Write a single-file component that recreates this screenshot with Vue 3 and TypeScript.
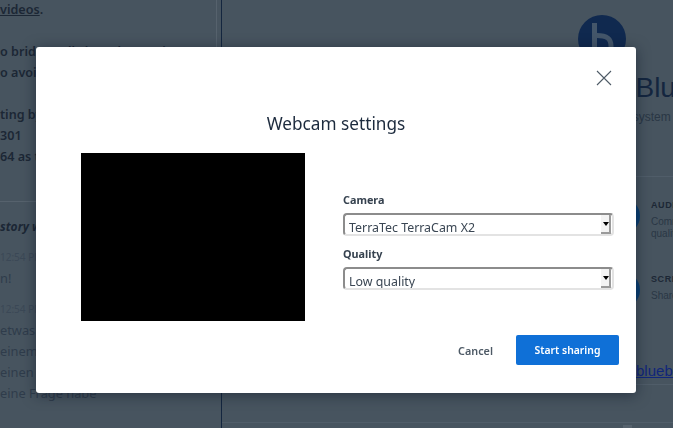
<script setup lang="ts">
const notes = [
  { html: ['<u>videos</u>.'] },
  { html: ['o bridge calls into the session', 'o avoid echo and mute'] },
  { html: ['ting by phone, call', '301', '64 as the PIN number'] },
]

const settings = [
  { label: 'Camera', value: 'TerraTec TerraCam X2' },
  { label: 'Quality', value: 'Low quality' },
]
</script>

<template>
  <div class="page">
    <aside class="left">
      <div class="notes">
        <p v-for="(block, i) in notes" :key="i" class="block">
          <span v-for="line in block.html" :key="line" class="line" v-html="line"></span>
        </p>
      </div>
      <div class="chat">
        <div class="history">story will be saved</div>
        <div class="stamp">12:54 PM</div>
        <div class="msg">n!</div>
        <div class="stamp">12:54 PM</div>
        <div class="msg">etwas spät</div>
        <div class="msg">einem Mikrofon</div>
        <div class="msg">einen Fehler</div>
        <div class="msg">eine Frage habe</div>
      </div>
    </aside>

    <main class="right">
      <div class="logo">
        <svg viewBox="0 0 48 48" width="48" height="48">
          <circle cx="24" cy="24" r="24" fill="#10294f" />
          <path d="M16.5 8V48M19 20.5C28 20.5 33 23 33 31V48" stroke="#44566a" stroke-width="5" fill="none" />
        </svg>
      </div>
      <h1 class="brand">BigBlueButton</h1>
      <div class="tagline">An open source web conferencing system</div>
      <div class="features">
        <div class="feature">
          <span class="dot"></span>
          <div>
            <div class="feature-title">AUDIO CONFERENCE</div>
            <div class="feature-text">Communicate using high<br />quality audio.</div>
          </div>
        </div>
        <div class="feature">
          <span class="dot"></span>
          <div>
            <div class="feature-title">SCREEN SHARING</div>
            <div class="feature-text">Share your screen.</div>
          </div>
        </div>
      </div>
      <div class="site-row">
        <a class="site">bigbluebutton.org</a>
      </div>
      <div class="bottom-bar"><span class="bar-box"></span></div>
    </main>

    <div class="overlay">
      <section class="modal">
        <button class="close" aria-label="Close">
          <svg viewBox="0 0 16 16" width="16" height="16">
            <path d="M1 1l14 14M15 1L1 15" stroke="#4e5a66" stroke-width="1.1" fill="none" />
          </svg>
        </button>
        <h2 class="title">Webcam settings</h2>
        <div class="body">
          <div class="video"></div>
          <div class="fields">
            <div v-for="s in settings" :key="s.label" class="field">
              <label>{{ s.label }}</label>
              <div class="select">
                <span class="value">{{ s.value }}</span>
                <span class="arrow"></span>
              </div>
            </div>
          </div>
        </div>
        <footer class="actions">
          <button class="cancel">Cancel</button>
          <button class="start">Start sharing</button>
        </footer>
      </section>
    </div>
  </div>
</template>

<style>
html,
body {
  margin: 0;
  overflow: hidden;
}
</style>

<style scoped>
.page {
  width: 673px;
  height: 428px;
  display: flex;
  overflow: hidden;
  background: #47545f;
  font-family: "Noto Sans", sans-serif;
  color: #1c2735;
}
.left {
  width: 222px;
  flex: none;
  box-sizing: border-box;
  border-right: 1px solid #14263f;
  overflow: hidden;
  white-space: nowrap;
  font-size: 12.8px;
  line-height: 21px;
}
.notes {
  width: 217px;
  height: 203px;
  margin-top: -1px;
  box-sizing: border-box;
  border-right: 1px solid #56626d;
  border-bottom: 1px solid #56626d;
  font-size: 12.6px;
  font-weight: 600;
  overflow: hidden;
}
.block {
  margin: 0 0 21px;
}
.line {
  display: block;
}
.chat {
  display: flex;
  flex-direction: column;
  padding-top: 14px;
}
.history {
  font-size: 12px;
  font-style: italic;
  font-weight: 700;
}
.stamp {
  font-size: 10px;
  color: #3b4856;
  margin-top: 10px;
}
.msg {
  color: #2f3c4b;
}
.right {
  flex: 1;
  min-width: 0;
  overflow: hidden;
  white-space: nowrap;
  font-family: "Liberation Sans", sans-serif;
}
.logo {
  display: flex;
  padding: 15px 0 0 356px;
}
.brand {
  margin: 8px 0 0 373px;
  font-size: 28px;
  line-height: 34px;
  font-weight: 400;
  color: #14263f;
}
.tagline {
  font-size: 12px;
  line-height: 14px;
  margin: 5px 0 0 226px;
  color: #2a3745;
}
.features {
  display: flex;
  flex-direction: column;
  gap: 38px;
  margin-top: 52px;
  padding: 21px 0 0 382px;
  border-top: 1px solid #505d69;
}
.feature {
  display: flex;
  gap: 11px;
  height: 36px;
}
.dot {
  width: 36px;
  height: 36px;
  border-radius: 50%;
  background: #0a3f73;
  flex: none;
}
.feature-title {
  margin-top: 1px;
  margin-bottom: 5px;
  font-size: 9px;
  font-weight: 700;
  line-height: 12px;
  letter-spacing: 0.6px;
}
.feature-text {
  font-size: 10px;
  line-height: 12px;
  color: #2a3745;
}
.site-row {
  margin-top: 54px;
  padding: 0 0 4px 394px;
  border-bottom: 1px solid #505d69;
}
.site {
  display: block;
  font-size: 15px;
  line-height: 18px;
  color: #10267a;
  text-decoration: underline;
}
.bottom-bar {
  margin-top: 37px;
  border-top: 1px solid #505d69;
  padding: 2px 0 0 401px;
}
.bar-box {
  display: block;
  width: 9px;
  height: 6px;
  background: #56626d;
}
.overlay {
  position: fixed;
  inset: 0;
  display: flex;
  justify-content: center;
  align-items: flex-start;
  padding: 47px 1px 0 0;
  box-sizing: border-box;
}
.modal {
  position: relative;
  width: 600px;
  height: 346px;
  box-sizing: border-box;
  padding: 64px 17px 0 45px;
  background: #fff;
  border-radius: 3px;
  box-shadow: 0 2px 14px rgba(10, 20, 35, 0.5);
  display: flex;
  flex-direction: column;
}
.close {
  position: absolute;
  top: 23px;
  right: 24px;
  width: 16px;
  height: 16px;
  padding: 0;
  border: 0;
  background: none;
  display: flex;
}
.title {
  margin: 0 -17px 0 -45px;
  text-align: center;
  font-size: 17.2px;
  line-height: 26px;
  font-weight: 400;
  color: #1c2a3d;
}
.body {
  display: flex;
  margin-top: 16px;
}
.video {
  width: 224px;
  height: 168px;
  background: #000;
  flex: none;
}
.fields {
  margin: 0 5px 0 38px;
  flex: 1;
  padding-top: 39px;
  display: flex;
  flex-direction: column;
  gap: 10px;
}
.field label {
  display: block;
  font-size: 10.8px;
  line-height: 16px;
  font-weight: 700;
  color: #36424f;
  margin-bottom: 5px;
}
.select {
  height: 23px;
  box-sizing: border-box;
  border: 2px solid;
  border-color: #8c8c8c #e3e3e3 #e3e3e3 #8c8c8c;
  border-radius: 4px;
  display: flex;
  align-items: center;
  justify-content: space-between;
  padding: 0 1px 0 4px;
  overflow: hidden;
}
.value {
  font-size: 12.4px;
  line-height: 18px;
  color: #3a4653;
  padding-top: 6px;
}
.arrow {
  width: 10px;
  height: 19px;
  flex: none;
  box-sizing: border-box;
  background: #f3f3f3;
  border-right: 2px solid #9a9a9a;
  border-bottom: 2px solid #9a9a9a;
  position: relative;
}
.arrow::after {
  content: "";
  position: absolute;
  left: 2px;
  top: 7px;
  border-left: 3px solid transparent;
  border-right: 3px solid transparent;
  border-top: 4px solid #000;
}
.actions {
  margin-top: 14px;
  display: flex;
  justify-content: flex-end;
  align-items: center;
  gap: 23px;
}
.actions button {
  font-family: inherit;
  border: 0;
  font-size: 10.8px;
  font-weight: 600;
  padding: 0;
}
.cancel {
  background: none;
  color: #4e5a66;
}
.actions .start {
  width: 103px;
  height: 30px;
  background: #0f70d7;
  color: #fff;
  border-radius: 2px;
  font-size: 10.4px;
}
</style>
